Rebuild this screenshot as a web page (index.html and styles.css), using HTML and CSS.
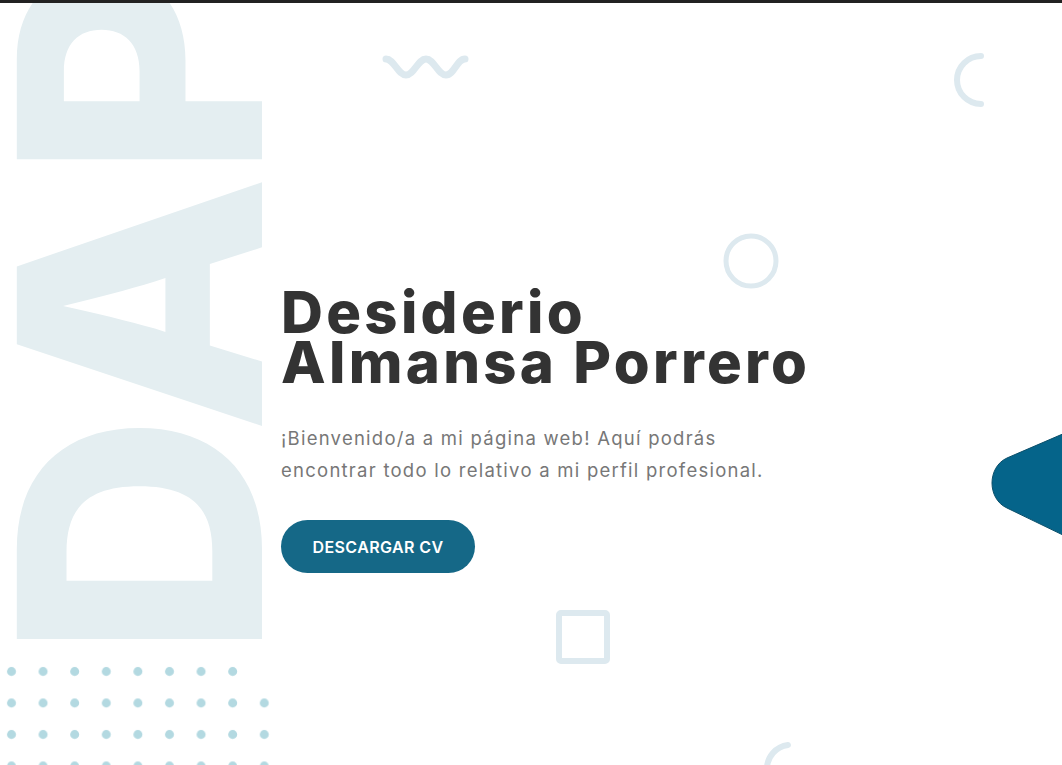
FILE: index.html
```html
<!DOCTYPE html>
<html lang="es">
<head>
<meta charset="utf-8">
<title>Desiderio Almansa Porrero</title>
<link rel="stylesheet" href="styles.css">
</head>
<body>
<div class="topbar"></div>
<section class="hero">
  <div class="bg-letters">DAP</div>

  <svg class="deco wave" width="100" height="38" viewBox="0 0 100 38"><path d="M10 11 C 18 11, 22 27, 30 27 S 42 11, 50 11 S 62 27, 70 27 S 81 11, 89 11" fill="none" stroke="#dde9ef" stroke-width="7" stroke-linecap="round"/></svg>
  <svg class="deco arc-top" width="40" height="60" viewBox="0 0 40 60"><path d="M30 5 A 24 24 0 0 0 30 53" fill="none" stroke="#dde9ef" stroke-width="6" stroke-linecap="round"/></svg>
  <svg class="deco ring" width="60" height="60" viewBox="0 0 60 60"><circle cx="30" cy="30" r="25" fill="none" stroke="#dde9ef" stroke-width="5"/></svg>
  <svg class="deco square" width="60" height="60" viewBox="0 0 60 60"><rect x="6" y="6" width="48" height="48" rx="2" fill="none" stroke="#dde9ef" stroke-width="6"/></svg>
  <svg class="deco arc-bottom" width="40" height="40" viewBox="0 0 40 40"><path d="M26 6 A 24 24 0 0 0 5 30" fill="none" stroke="#dde9ef" stroke-width="6" stroke-linecap="round"/></svg>
  <svg class="deco tri" width="74" height="108" viewBox="0 0 74 108"><path d="M74 1 L 16 26 C -4 35, -4 67, 16 76 L 74 104 Z" fill="#05648a" stroke="#0b4f6a" stroke-width="1"/></svg>
  <svg class="deco dots" width="280" height="110" viewBox="0 0 280 110">
    <defs><pattern id="dp" x="0" y="0" width="31.6" height="31.5" patternUnits="userSpaceOnUse"><circle cx="11.5" cy="8.5" r="4.5" fill="#b3d9e1"/></pattern></defs>
    <rect x="0" y="0" width="246" height="31" fill="url(#dp)"/>
    <rect x="0" y="31" width="280" height="79" fill="url(#dp)"/>
  </svg>

  <div class="content">
    <h1 class="title">Desiderio<br>Almansa Porrero</h1>
    <p class="lead">¡Bienvenido/a a mi página web! Aquí podrás<br>encontrar todo lo relativo a mi perfil profesional.</p>
    <a class="btn" href="#">DESCARGAR CV</a>
  </div>
</section>
</body>
</html>
```

FILE: styles.css
```css
* { box-sizing: border-box; }
html, body { margin: 0; padding: 0; background: #fff; }
body { font-family: "Inter", "Open Sans", sans-serif; }

.topbar { height: 3px; background: #222; }

.hero {
  position: relative;
  height: 762px;
  overflow: hidden;
}

.bg-letters {
  position: absolute;
  left: -29px;
  top: -185px;
  height: 840px;
  writing-mode: vertical-rl;
  transform: rotate(180deg);
  font-family: "Inter", sans-serif;
  font-weight: 800;
  font-size: 337px;
  line-height: 1;
  color: #e4eef1;
  letter-spacing: -4px;
  white-space: nowrap;
}

.deco { position: absolute; display: block; }
.wave { left: 376px; top: 45px; }
.arc-top { left: 951px; top: 48px; }
.ring { left: 721px; top: 228px; }
.square { left: 553px; top: 604px; }
.arc-bottom { left: 762px; top: 736px; }
.tri { right: -3px; top: 429px; }
.dots { left: 0; top: 660px; }

.content {
  position: relative;
  padding: 284px 0 0 281px;
}

.title {
  margin: 0;
  font-family: "Inter", sans-serif;
  font-weight: 800;
  font-size: 58px;
  line-height: 50px;
  color: #333;
  letter-spacing: 3.3px;
}

.lead {
  margin: 35px 0 0;
  font-family: "Inter", sans-serif;
  font-size: 18.5px;
  line-height: 32px;
  color: #777;
  letter-spacing: 1.25px;
}

.btn {
  display: inline-flex;
  align-items: center;
  justify-content: center;
  margin-top: 34px;
  width: 194px;
  height: 53px;
  border-radius: 27px;
  background: #156887;
  color: #fff;
  font-family: "Inter", sans-serif;
  font-weight: 600;
  font-size: 16px;
  letter-spacing: 0.4px;
  text-decoration: none;
}
```
